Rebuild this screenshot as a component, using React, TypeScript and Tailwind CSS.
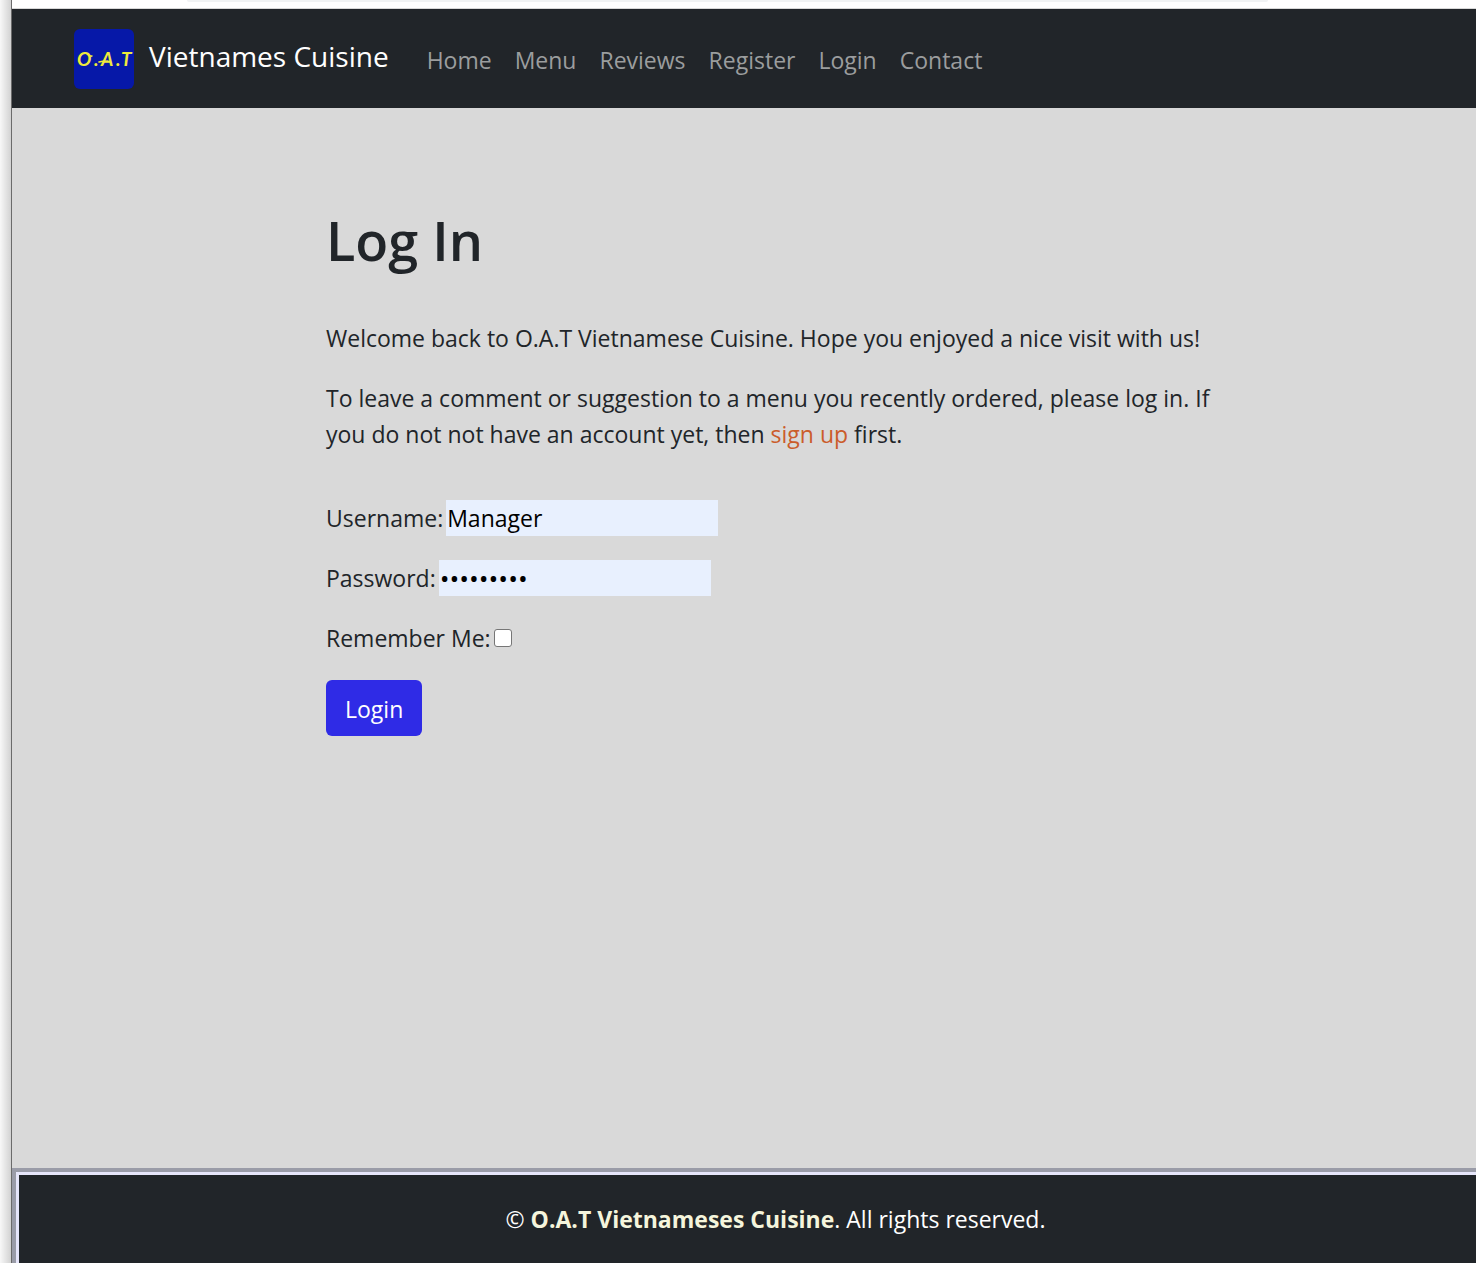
const links = ["Home", "Menu", "Reviews", "Register", "Login", "Contact"];

function Logo() {
  return (
    <svg className="size-15 rounded-md bg-[#0618a8]" viewBox="0 0 60 60" role="img" aria-label="O.A.T logo">
      <text
        x="3 20 27 42 47"
        y="37"
        fill="#eeea3c"
        className="font-['Lato'] text-[19px] font-bold italic"
      >
        O.A.T
      </text>
      <path d="M11 24c3 0 3 4 7 3M25 33c3-1 6-1 9-1" fill="none" stroke="#eeea3c" strokeWidth="1.5" strokeLinecap="round" />
    </svg>
  );
}

function Header() {
  return (
    <header className="flex items-center bg-[#212529] px-[62px] pt-5 pb-[19px]">
      <a href="#" className="flex items-center gap-[15px] text-[28px] leading-[45px] text-white">
        <Logo />
        <span className="pb-1.5">Vietnames Cuisine</span>
      </a>
      <nav className="ml-[38px] flex gap-[23px] pt-0.5">
        {links.map((name) => (
          <a key={name} href="#" className="leading-9 text-[#9b9d9e]">
            {name}
          </a>
        ))}
      </nav>
    </header>
  );
}

function LoginForm() {
  return (
    <form className="mt-12 flex flex-col items-start gap-6" onSubmit={(e) => e.preventDefault()}>
      <div className="flex gap-[3px]">
        <label htmlFor="username">Username:</label>
        <input
          id="username"
          type="text"
          defaultValue="Manager"
          className="h-9 w-[272px] bg-[#e8f0fe] px-px text-black"
        />
      </div>
      <div className="flex gap-[3px]">
        <label htmlFor="password">Password:</label>
        <input
          id="password"
          type="password"
          defaultValue="secret123"
          className="h-9 w-[272px] bg-[#e8f0fe] px-px text-[26px] text-black"
        />
      </div>
      <div className="flex items-center gap-[3px]">
        <label htmlFor="remember">Remember Me:</label>
        <input
          id="remember"
          type="checkbox"
          className="size-[18px] appearance-none rounded-[3px] border border-[#767676] bg-white checked:bg-[#2f2be6]"
        />
      </div>
      <button type="submit" className="h-14 rounded-md bg-[#2f2be6] px-[19px] pt-0.5 text-white">
        Login
      </button>
    </form>
  );
}

export default function App() {
  return (
    <div className="flex min-h-screen bg-white font-['Open_Sans',sans-serif] text-[23px] leading-9 text-[#212529]">
      <div className="w-3 shrink-0 border-r border-[#6b6b6b] bg-linear-to-r from-[#f8f8f8] to-[#d2d2d2]" />
      <div className="flex min-w-0 flex-1 flex-col">
        <div className="h-[9px] border-b border-[#d8d8d8] pr-[208px] pl-[175px]">
          <div className="h-0.5 rounded-b-full bg-[#f1f3f4]" />
        </div>
        <Header />
        <main className="flex-1 bg-[#d9d9d9] pt-24 pl-16">
          <div className="mx-auto max-w-[900px]">
            <h1 className="text-[54px] leading-[72px] font-semibold">Log In</h1>
            <p className="mt-11">Welcome back to O.A.T Vietnamese Cuisine. Hope you enjoyed a nice visit with us!</p>
            <p className="mt-6">
              To leave a comment or suggestion to a menu you recently ordered, please log in. If you do not not have an
              account yet, then{" "}
              <a href="#" className="text-[#cb5c2b]">
                sign up
              </a>{" "}
              first.
            </p>
            <LoginForm />
          </div>
        </main>
        <footer className="border-t-4 border-l-4 border-[#9a9ca8]">
          <div className="border-t-[3px] border-l-[3px] border-[#e6e6fa] bg-[#212529] py-[26px] pl-14 text-center text-white">
            © <strong className="text-[#f5f5dc]">O.A.T Vietnameses Cuisine</strong>. All rights reserved.
          </div>
        </footer>
      </div>
    </div>
  );
}
